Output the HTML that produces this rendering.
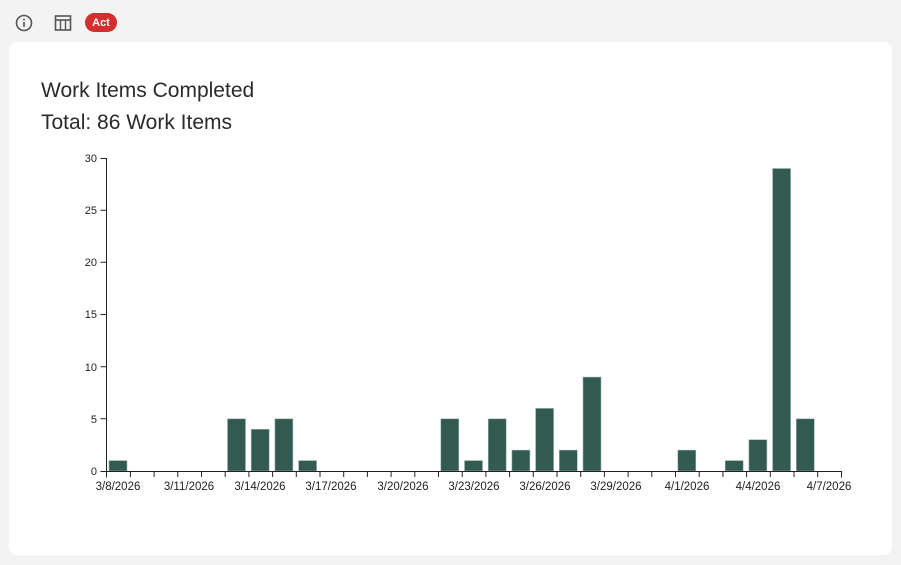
<!DOCTYPE html>
<html><head><meta charset="utf-8"><style>
html,body{margin:0;padding:0;background:#f3f3f3;width:901px;height:565px;overflow:hidden;font-family:"Liberation Sans",sans-serif;}
.card{position:absolute;left:9px;top:42px;width:883px;height:513px;background:#fff;border-radius:8px;}
.act{position:absolute;left:85px;top:13px;width:32px;height:19px;border-radius:10px;background:#d32f2f;color:#fff;font-size:11px;font-weight:bold;text-align:center;line-height:20px;}
</style></head><body>
<svg style="position:absolute;left:14px;top:13px" width="20" height="20" viewBox="0 0 20 20"><circle cx="10" cy="10" r="7.5" fill="none" stroke="#555" stroke-width="1.6"/><rect x="9.2" y="9" width="1.6" height="5" fill="#555"/><circle cx="10" cy="6.6" r="1" fill="#555"/></svg>
<svg style="position:absolute;left:53px;top:13px" width="20" height="20" viewBox="0 0 20 20"><rect x="2.5" y="3" width="15" height="14" fill="none" stroke="#555" stroke-width="1.6"/><line x1="2.5" y1="7" x2="17.5" y2="7" stroke="#555" stroke-width="1.6"/><line x1="7.5" y1="7" x2="7.5" y2="17" stroke="#555" stroke-width="1.4"/><line x1="12.5" y1="7" x2="12.5" y2="17" stroke="#555" stroke-width="1.4"/></svg>
<div class="act">Act</div>
<div class="card"></div>
<svg style="position:absolute;left:0;top:0" width="901" height="565">
<text x="41" y="97" font-size="21" fill="#2a2a2a">Work Items Completed</text>
<text x="41" y="129" font-size="21" fill="#2a2a2a">Total: 86 Work Items</text>
<g fill="#335a50" stroke="#9bb5ad" stroke-width="0.6">
<rect x="109" y="460.6" width="18" height="10.4"/>
<rect x="227.5" y="418.8" width="18" height="52.2"/>
<rect x="251.2" y="429.3" width="18" height="41.7"/>
<rect x="274.9" y="418.8" width="18" height="52.2"/>
<rect x="298.6" y="460.6" width="18" height="10.4"/>
<rect x="440.8" y="418.8" width="18" height="52.2"/>
<rect x="464.5" y="460.6" width="18" height="10.4"/>
<rect x="488.2" y="418.8" width="18" height="52.2"/>
<rect x="511.9" y="450.1" width="18" height="20.9"/>
<rect x="535.6" y="408.4" width="18" height="62.6"/>
<rect x="559.3" y="450.1" width="18" height="20.9"/>
<rect x="583" y="377.1" width="18" height="93.9"/>
<rect x="677.8" y="450.1" width="18" height="20.9"/>
<rect x="725.2" y="460.6" width="18" height="10.4"/>
<rect x="748.9" y="439.7" width="18" height="31.3"/>
<rect x="772.6" y="168.5" width="18" height="302.5"/>
<rect x="796.3" y="418.8" width="18" height="52.2"/>
</g>
<g stroke="#222" stroke-width="1" fill="none">
<path d="M100.5,158.5H106.5V471.5H100.5"/>
<path d="M100.5,418.8H106.5M100.5,366.7H106.5M100.5,314.5H106.5M100.5,262.3H106.5M100.5,210.2H106.5"/>
<path d="M106.5,477.5V471.5H841.5V477.5"/>
</g>
<g stroke="#222" stroke-width="1">
<line x1="130.4" y1="471" x2="130.4" y2="477"/><line x1="154.1" y1="471" x2="154.1" y2="477"/><line x1="177.8" y1="471" x2="177.8" y2="477"/><line x1="201.5" y1="471" x2="201.5" y2="477"/><line x1="225.2" y1="471" x2="225.2" y2="477"/><line x1="248.9" y1="471" x2="248.9" y2="477"/><line x1="272.6" y1="471" x2="272.6" y2="477"/><line x1="296.3" y1="471" x2="296.3" y2="477"/><line x1="320" y1="471" x2="320" y2="477"/><line x1="343.7" y1="471" x2="343.7" y2="477"/><line x1="367.4" y1="471" x2="367.4" y2="477"/><line x1="391.1" y1="471" x2="391.1" y2="477"/><line x1="414.8" y1="471" x2="414.8" y2="477"/><line x1="438.5" y1="471" x2="438.5" y2="477"/><line x1="462.2" y1="471" x2="462.2" y2="477"/><line x1="485.9" y1="471" x2="485.9" y2="477"/><line x1="509.6" y1="471" x2="509.6" y2="477"/><line x1="533.3" y1="471" x2="533.3" y2="477"/><line x1="557" y1="471" x2="557" y2="477"/><line x1="580.7" y1="471" x2="580.7" y2="477"/><line x1="604.4" y1="471" x2="604.4" y2="477"/><line x1="628.1" y1="471" x2="628.1" y2="477"/><line x1="651.8" y1="471" x2="651.8" y2="477"/><line x1="675.5" y1="471" x2="675.5" y2="477"/><line x1="699.2" y1="471" x2="699.2" y2="477"/><line x1="722.9" y1="471" x2="722.9" y2="477"/><line x1="746.6" y1="471" x2="746.6" y2="477"/><line x1="770.3" y1="471" x2="770.3" y2="477"/><line x1="794" y1="471" x2="794" y2="477"/><line x1="817.7" y1="471" x2="817.7" y2="477"/>
</g>
<g font-size="11" fill="#222" text-anchor="end">
<text x="97" y="475">0</text><text x="97" y="423">5</text><text x="97" y="371">10</text><text x="97" y="318">15</text><text x="97" y="266">20</text><text x="97" y="214">25</text><text x="97" y="162">30</text>
</g>
<g font-size="11.5" fill="#222" text-anchor="middle">
<text x="118" y="490">3/8/2026</text><text x="189" y="490">3/11/2026</text><text x="260" y="490">3/14/2026</text><text x="331" y="490">3/17/2026</text><text x="403" y="490">3/20/2026</text><text x="474" y="490">3/23/2026</text><text x="545" y="490">3/26/2026</text><text x="616" y="490">3/29/2026</text><text x="687" y="490">4/1/2026</text><text x="758" y="490">4/4/2026</text><text x="829" y="490">4/7/2026</text>
</g>
</svg>
</body></html>
